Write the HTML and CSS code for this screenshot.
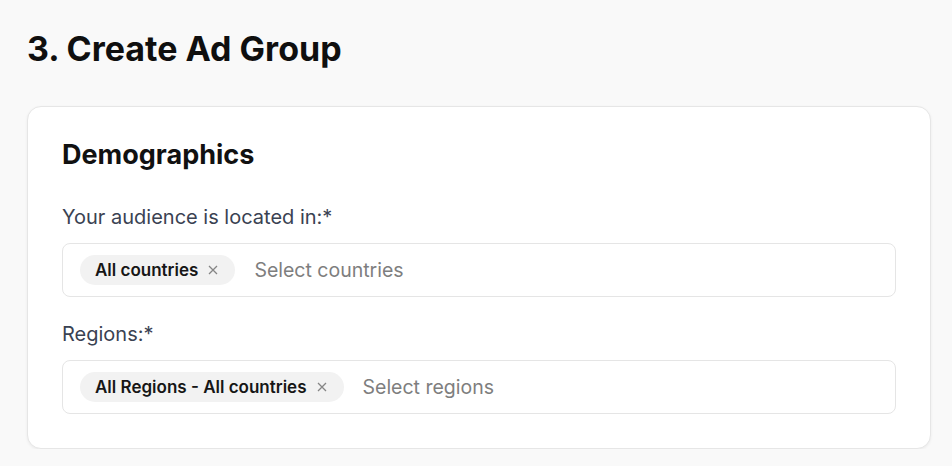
FILE: index.html
```html
<!DOCTYPE html>
<html lang="en">
<head>
    <meta charset="UTF-8">
    <meta name="viewport" content="width=device-width, initial-scale=1.0">
    <title>Create Ad Group</title>
    <link rel="stylesheet" href="styles.css">
</head>
<body>
    <main class="page">
        <h1 class="page-title">3. Create Ad Group</h1>

        <section class="card">
            <h2 class="card-title">Demographics</h2>

            <div class="field">
                <label class="field-label" for="countries">Your audience is located in:*</label>
                <div class="select-box">
                    <span class="chip">All countries
                        <svg class="chip-x" width="10" height="10" viewBox="0 0 10 10"><path d="M1 1L9 9M9 1L1 9"/></svg>
                    </span>
                    <input class="select-input" id="countries" type="text" placeholder="Select countries">
                </div>
            </div>

            <div class="field">
                <label class="field-label" for="regions">Regions:*</label>
                <div class="select-box">
                    <span class="chip">All Regions - All countries
                        <svg class="chip-x" width="10" height="10" viewBox="0 0 10 10"><path d="M1 1L9 9M9 1L1 9"/></svg>
                    </span>
                    <input class="select-input" id="regions" type="text" placeholder="Select regions">
                </div>
            </div>
        </section>
    </main>
</body>
</html>
```

FILE: styles.css
```css
* {
    box-sizing: border-box;
}

body {
    margin: 0;
    background-color: #f9f9f9;
    font-family: Inter, "Noto Sans", sans-serif;
    color: #0f0f0f;
}

.page {
    padding: 29px 21px 0 27px;
}

.page-title {
    margin: 0;
    font-size: 34px;
    line-height: 40px;
    font-weight: 700;
}

.card {
    margin-top: 37px;
    background-color: #ffffff;
    border: 1px solid #e6e6e6;
    border-radius: 14px;
    box-shadow: 0 1px 3px rgba(0, 0, 0, 0.06);
    padding: 32px 34px 34px 34px;
}

.card-title {
    margin: 0 0 34px 0;
    font-size: 27px;
    line-height: 32px;
    font-weight: 700;
    color: #111111;
}

.field + .field {
    margin-top: 25px;
}

.field-label {
    display: block;
    font-size: 20px;
    line-height: 24px;
    color: #3a4252;
    margin-bottom: 14px;
}

.select-box {
    display: flex;
    align-items: center;
    gap: 19px;
    height: 54px;
    padding: 0 17px;
    border: 1px solid #e5e5e5;
    border-radius: 8px;
    background-color: #ffffff;
}

.chip {
    display: inline-flex;
    align-items: center;
    gap: 10px;
    height: 30px;
    padding: 0 17px 0 15px;
    border-radius: 15px;
    background-color: #f2f2f2;
    font-size: 17px;
    font-weight: 600;
    color: #161616;
    white-space: nowrap;
}

.chip-x {
    stroke: #858585;
    stroke-width: 1.3;
    fill: none;
}

.select-input {
    flex: 1;
    border: none;
    outline: none;
    background: transparent;
    font-family: inherit;
    font-size: 19.5px;
    padding: 0;
    color: #222;
}

.select-input::placeholder {
    color: #7e7e7e;
}
```
